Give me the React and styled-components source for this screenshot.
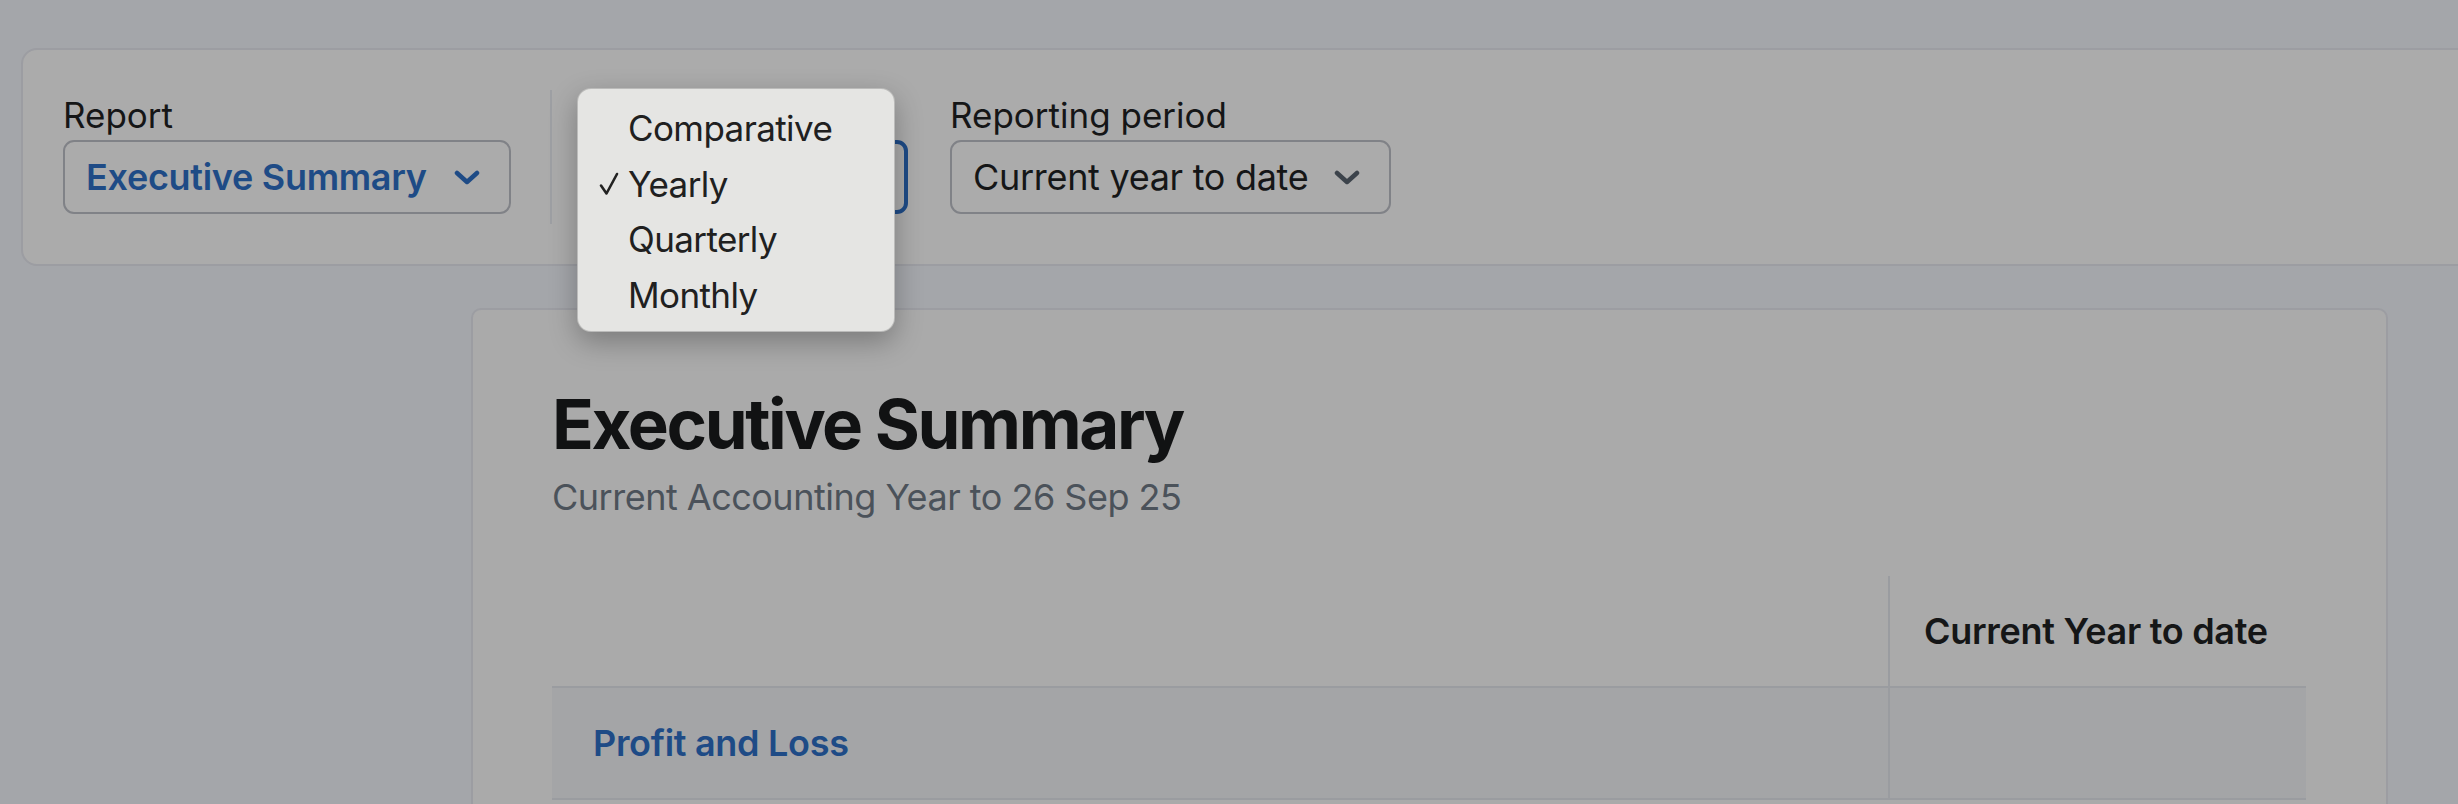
import styled, { createGlobalStyle } from 'styled-components';
import { useEffect } from 'react';

const GlobalStyle = createGlobalStyle`
  html, body {
    margin: 0;
    height: 804px;
    overflow: hidden;
    background: #a4a6aa;
    font-family: Inter, "Noto Sans", sans-serif;
    color: #151617;
  }
`;

const periodOptions = ['Comparative', 'Yearly', 'Quarterly', 'Monthly'];

export default function App() {
  useEffect(() => {
    document.title = 'Executive Summary';
  }, []);

  return (<>
    <GlobalStyle />
    <Page>
      <FilterBar>
        <Field>
          <Label>Report</Label>
          <Select $width={448} $accent>
            <span>Executive Summary</span>
            <Chevron color="#1e4b86" />
          </Select>
        </Field>
        <Divider />
        <Field $popupHost>
          {/* label and value sit under the open native menu */}
          <Label aria-hidden="true">&nbsp;</Label>
          <Select $width={304} $focused />
          <Menu>
            {periodOptions.map((opt) => (
              <MenuItem key={opt}>
                <CheckSlot>{opt === 'Yearly' && <Check />}</CheckSlot>
                {opt}
              </MenuItem>
            ))}
          </Menu>
        </Field>
        <Field>
          <Label>Reporting period</Label>
          <Select $width={441}>
            <span>Current year to date</span>
            <Chevron color="#3c434b" />
          </Select>
        </Field>
      </FilterBar>

      <Card>
        <Title>Executive Summary</Title>
        <Subtitle>Current Accounting Year to 26 Sep 25</Subtitle>
        <Table>
          <HeadRow>
            <Cell />
            <HeadCell>Current Year to date</HeadCell>
          </HeadRow>
          <BodyRow>
            <SectionCell>Profit and Loss</SectionCell>
            <Cell $divided />
          </BodyRow>
        </Table>
      </Card>
    </Page>
  </>);
}

function Chevron({ color }) {
  return (
    <svg width="26" height="15" viewBox="0 0 26 15" fill="none">
      <polyline points="3,3 13,12 23,3" stroke={color} strokeWidth="4.5"
        strokeLinecap="round" strokeLinejoin="round" />
    </svg>
  );
}

function Check() {
  return (
    <svg width="20" height="24" viewBox="0 0 20 24" fill="none">
      <path d="M2 13.5 L7.5 21.5 L18 2" stroke="#222" strokeWidth="2.6"
        strokeLinecap="round" strokeLinejoin="round" />
    </svg>
  );
}

const Page = styled.div`
  padding-top: 48px;
`;

const FilterBar = styled.div`
  display: flex;
  align-items: stretch;
  margin: 0 -40px 0 21px;
  padding: 44px 0 50px 40px;
  background: #ababab;
  border: 2px solid #9c9da2;
  border-radius: 16px;
`;

const Field = styled.div`
  position: ${(p) => (p.$popupHost ? 'relative' : 'static')};
  display: flex;
  flex-direction: column;
  margin-right: 42px;
`;

const Label = styled.div`
  font-size: 35px;
  line-height: 42px;
  margin-bottom: 4px;
  color: #151617;
`;

const Select = styled.div`
  box-sizing: border-box;
  width: ${(p) => p.$width}px;
  height: 74px;
  display: flex;
  align-items: center;
  justify-content: space-between;
  padding: 0 29px 0 21px;
  border: ${(p) => (p.$focused ? '4px solid #1e4b86' : '2px solid #808287')};
  border-radius: 11px;
  font-size: 36px;
  font-weight: ${(p) => (p.$accent ? 600 : 400)};
  color: ${(p) => (p.$accent ? '#1e4b86' : '#151617')};
  letter-spacing: -0.3px;
  white-space: nowrap;
`;

const Divider = styled.div`
  width: 2px;
  margin: -4px 52px -10px -3px;
  background: #9d9fa3;
`;

const Menu = styled.div`
  position: absolute;
  left: -27px;
  top: -6px;
  width: 318px;
  box-sizing: border-box;
  padding: 11px 0 8px;
  background: #e5e5e3;
  border: 1px solid rgba(0, 0, 0, 0.18);
  border-radius: 14px;
  box-shadow: 0 10px 28px rgba(0, 0, 0, 0.28);
  z-index: 2;
`;

const MenuItem = styled.div`
  display: flex;
  align-items: center;
  height: 55.7px;
  font-size: 35px;
  letter-spacing: -0.6px;
  color: #202020;
`;

const CheckSlot = styled.span`
  display: flex;
  align-items: center;
  width: 50px;
  padding-left: 21px;
  box-sizing: border-box;
`;

const Card = styled.div`
  margin: 42px 70px 0 471px;
  min-height: 600px;
  padding: 72px 80px 0 79px;
  background: #aaaaaa;
  border: 2px solid #9c9da2;
  border-radius: 10px;
`;

const Title = styled.h1`
  margin: 0;
  font-size: 69px;
  line-height: 84px;
  font-weight: 700;
  letter-spacing: -2.4px;
  color: #111213;
`;

const Subtitle = styled.p`
  margin: 9px 0 0;
  font-size: 36px;
  line-height: 44px;
  letter-spacing: -0.5px;
  color: #4b525a;
`;

const Table = styled.div`
  margin-top: 57px;
  display: grid;
  grid-template-columns: 1336px 1fr;
`;

const HeadRow = styled.div`
  display: contents;
`;

const BodyRow = styled.div`
  display: contents;
`;

const Cell = styled.div`
  height: 110px;
  border-left: ${(p) => (p.$divided ? '2px solid #9a9ca0' : 'none')};
  border-bottom: 2px solid #9a9ca0;
  background: ${(p) => (p.$divided ? '#a4a5a7' : 'transparent')};
`;

const HeadCell = styled.div`
  height: 110px;
  display: flex;
  align-items: center;
  padding-left: 34px;
  border-left: 2px solid #9a9ca0;
  border-bottom: 2px solid #9a9ca0;
  font-size: 36px;
  font-weight: 600;
  letter-spacing: -0.3px;
  color: #151617;
`;

const SectionCell = styled.div`
  height: 110px;
  display: flex;
  align-items: center;
  padding-left: 41px;
  background: #a4a5a7;
  border-bottom: 2px solid #9a9ca0;
  font-size: 36px;
  font-weight: 600;
  letter-spacing: -0.3px;
  color: #1e4b86;
`;
